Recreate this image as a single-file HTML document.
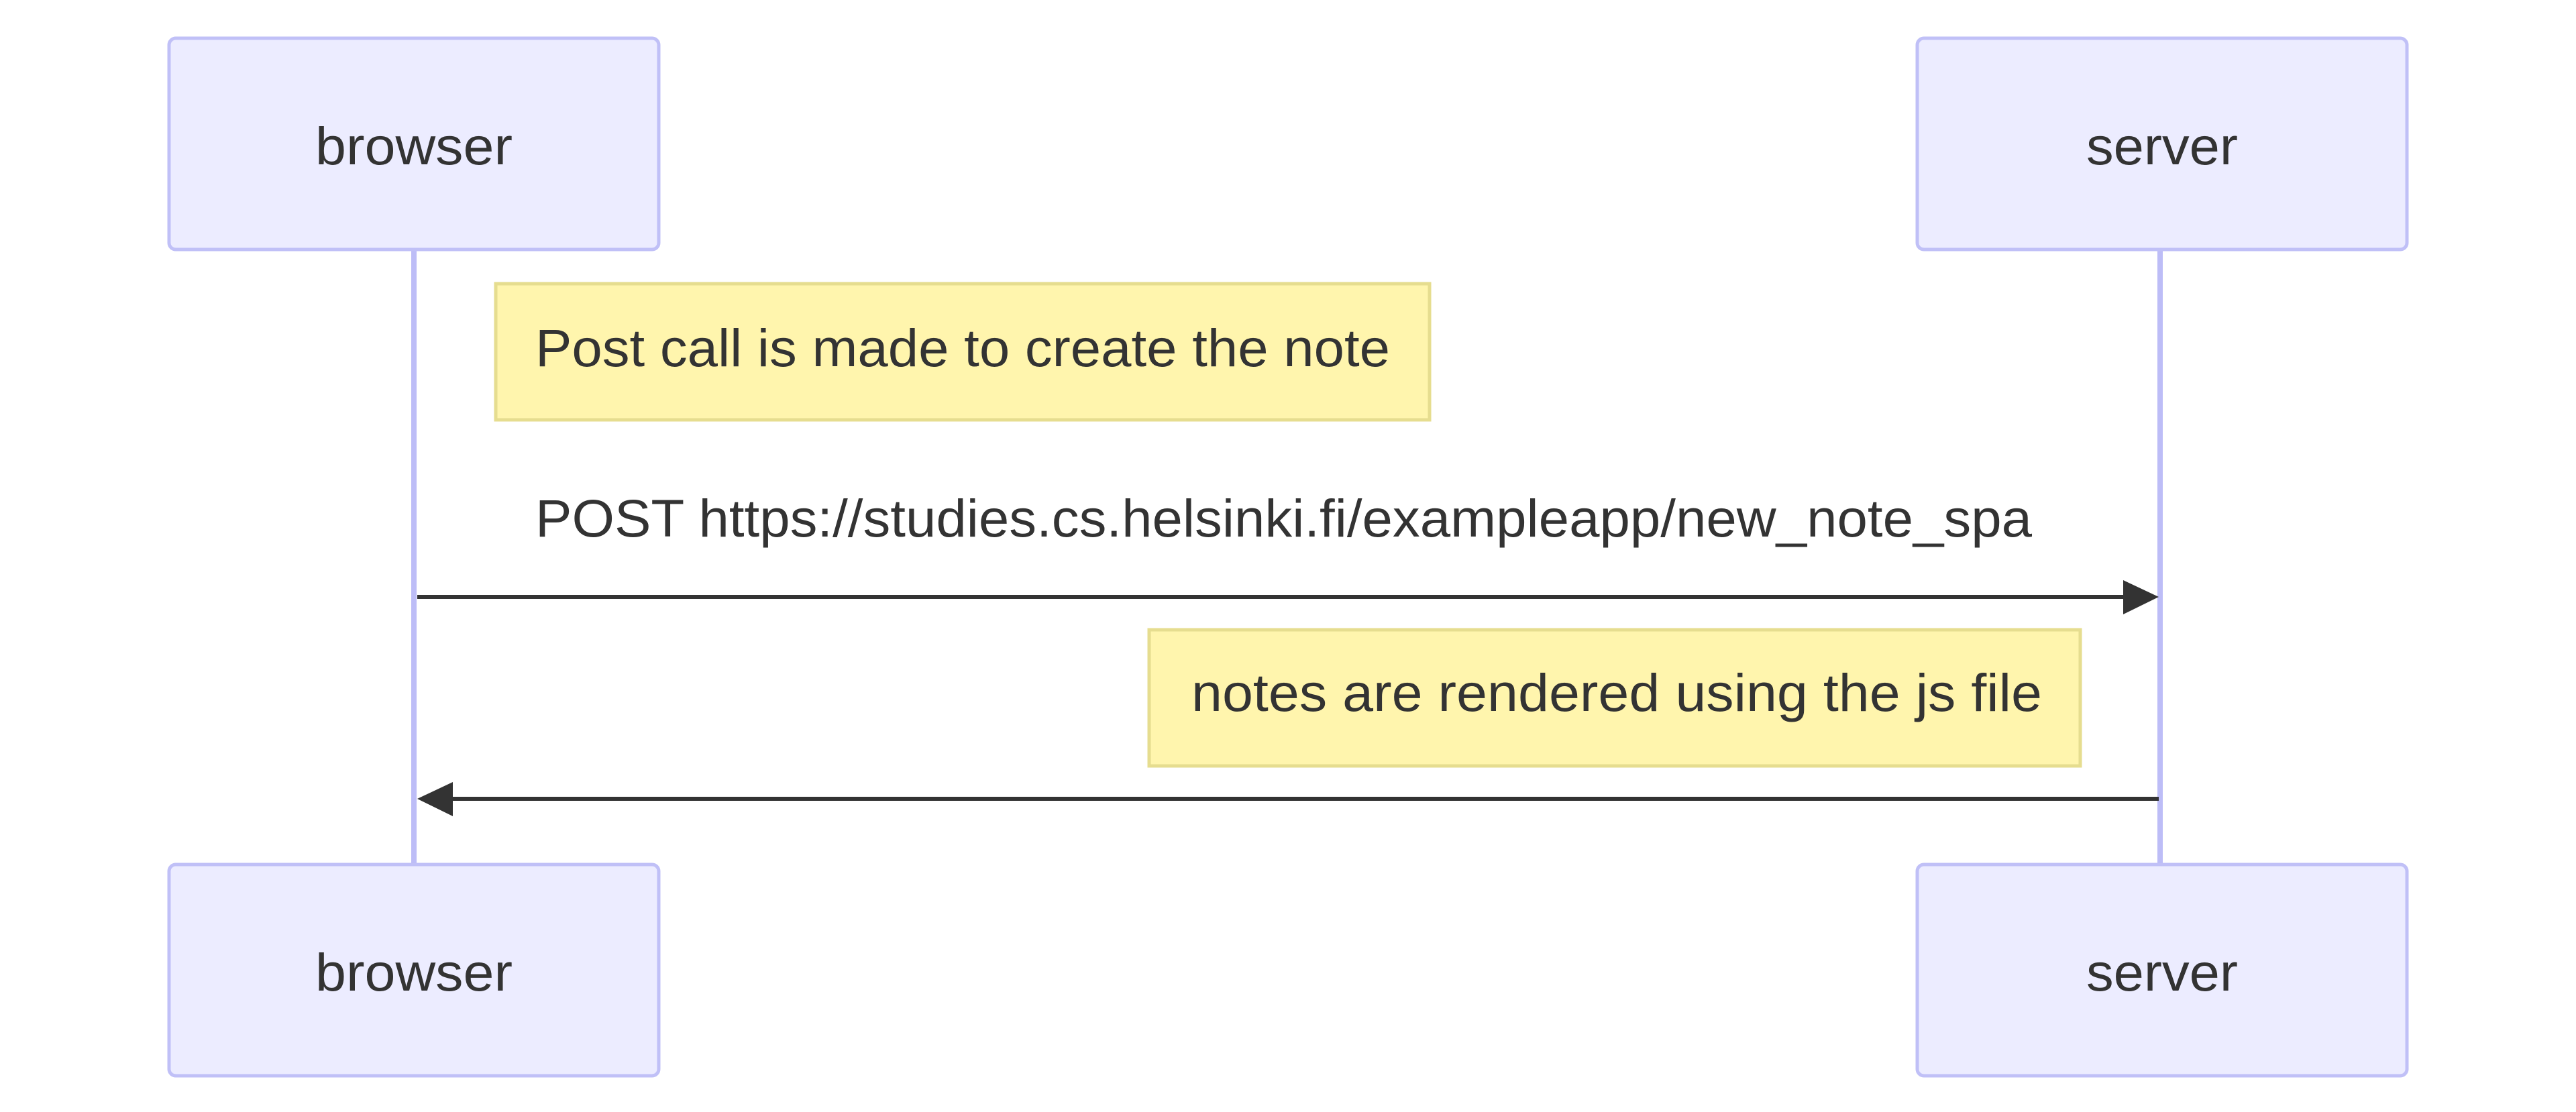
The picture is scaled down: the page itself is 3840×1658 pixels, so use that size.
<!DOCTYPE html>
<html><head><meta charset="utf-8"><style>
html,body{margin:0;padding:0;background:#fff;width:3840px;height:1658px;overflow:hidden}
text{font-family:"Liberation Sans",sans-serif;fill:#333;font-size:79px}
</style></head><body>
<svg width="3840" height="1658" viewBox="0 0 3840 1658" xmlns="http://www.w3.org/2000/svg">
<g stroke="#bdbdf7" stroke-width="8">
<line x1="617" y1="372" x2="617" y2="1290"/>
<line x1="3220" y1="372" x2="3220" y2="1290"/>
</g>
<g fill="#ececff" stroke="#c0c0f7" stroke-width="5">
<rect x="252" y="57" width="730" height="315" rx="10"/>
<rect x="2858" y="57" width="730" height="315" rx="10"/>
<rect x="252" y="1289" width="730" height="315" rx="10"/>
<rect x="2858" y="1289" width="730" height="315" rx="10"/>
</g>
<text x="470" y="245" textLength="294" lengthAdjust="spacingAndGlyphs">browser</text>
<text x="3110" y="245" textLength="226" lengthAdjust="spacingAndGlyphs">server</text>
<text x="470" y="1477" textLength="294" lengthAdjust="spacingAndGlyphs">browser</text>
<text x="3110" y="1477" textLength="226" lengthAdjust="spacingAndGlyphs">server</text>
<rect x="739" y="423" width="1392" height="203" fill="#fff5ad" stroke="#e6dd8f" stroke-width="5"/>
<text x="798" y="546" textLength="1274" lengthAdjust="spacingAndGlyphs">Post call is made to create the note</text>
<text x="798" y="800" textLength="2231" lengthAdjust="spacingAndGlyphs">POST https://studies.cs.helsinki.fi/exampleapp/new_note_spa</text>
<line x1="622" y1="890" x2="3170" y2="890" stroke="#333" stroke-width="6"/>
<polygon points="3165,865 3218,890 3165,916" fill="#333"/>
<rect x="1713" y="939" width="1388" height="203" fill="#fff5ad" stroke="#e6dd8f" stroke-width="5"/>
<text x="1776" y="1060" textLength="1268" lengthAdjust="spacingAndGlyphs">notes are rendered using the js file</text>
<line x1="670" y1="1191" x2="3218" y2="1191" stroke="#333" stroke-width="6"/>
<polygon points="675,1166 622,1191 675,1217" fill="#333"/>
</svg>
</body></html>
